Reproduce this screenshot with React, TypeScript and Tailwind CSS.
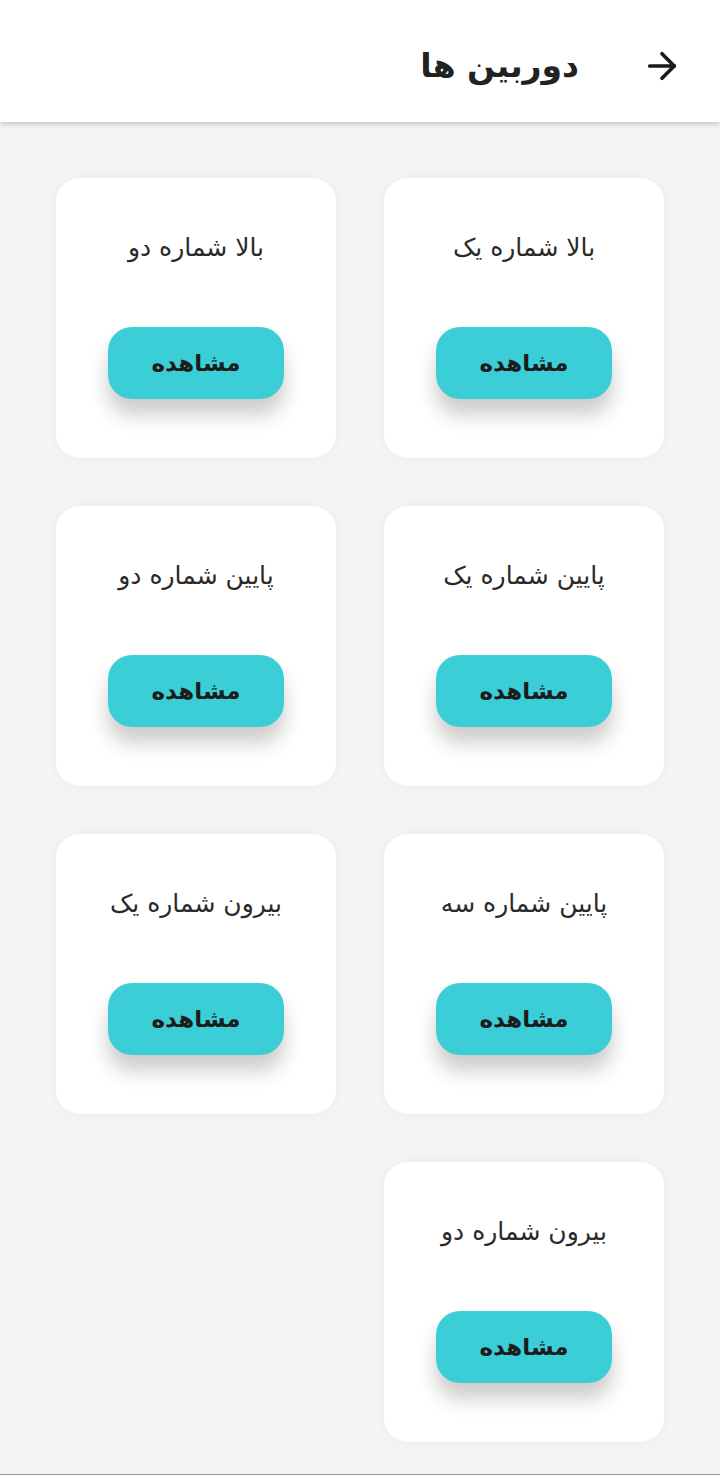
import { ArrowRight } from 'lucide-react';

// ────────────────────────────────────────────
// Camera list
// ────────────────────────────────────────────

const cameras = [
  'بالا شماره یک',
  'بالا شماره دو',
  'پایین شماره یک',
  'پایین شماره دو',
  'پایین شماره سه',
  'بیرون شماره یک',
  'بیرون شماره دو',
];

function CameraCard({ title }: { title: string }) {
  return (
    <div className="flex h-[280px] w-[280px] flex-col items-center rounded-[24px] bg-white shadow-[0_0_12px_rgba(0,0,0,0.04)]">
      <div className="mt-[51px] text-[25px] leading-[38px] text-[#2a2a2a]">{title}</div>
      <button className="mt-[60px] flex h-[72px] w-[176px] items-center justify-center rounded-[24px] bg-[#3bced6] text-[23px] font-bold text-[#1c1c1c] shadow-[0_16px_20px_rgba(0,0,0,0.2)]">
        مشاهده
      </button>
    </div>
  );
}

export default function App() {
  return (
    <div
      dir="rtl"
      className="flex min-h-[1475px] flex-col bg-[#f4f4f4] border-b border-[#9a9a9a]"
      style={{ fontFamily: '"DejaVu Sans", "Noto Sans", sans-serif' }}
    >
      <header className="relative z-10 flex h-[122px] items-center bg-white pr-[37px] pt-[10px] shadow-[0_2px_5px_rgba(0,0,0,0.2)]">
        <ArrowRight className="h-[42px] w-[42px] text-[#1a1a1a]" strokeWidth={2.1} />
        <h1 className="mr-[62px] text-[33px] font-bold text-[#222]">دوربین ها</h1>
      </header>
      <main className="grid grid-cols-[280px_280px] gap-x-[48px] gap-y-[48px] pr-[56px] pt-[56px]">
        {cameras.map((c) => (
          <CameraCard key={c} title={c} />
        ))}
      </main>
    </div>
  );
}
